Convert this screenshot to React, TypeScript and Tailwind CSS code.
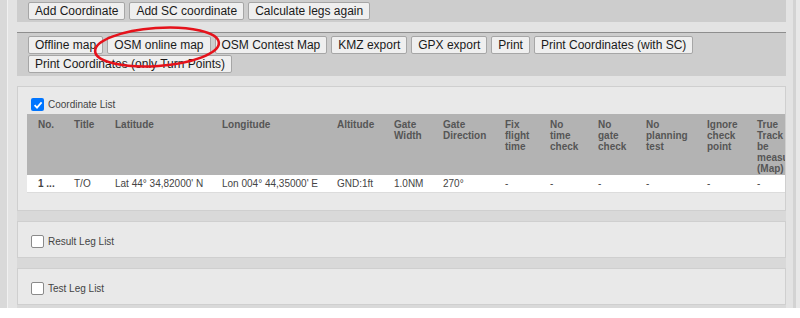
import React from 'react';

const cols = [
  { w: 47, pl: 11, head: ['No.'], val: '1 ...', bold: true },
  { w: 41, head: ['Title'], val: 'T/O' },
  { w: 107, head: ['Latitude'], val: "Lat 44° 34,82000' N" },
  { w: 115, head: ['Longitude'], val: "Lon 004° 44,35000' E" },
  { w: 57, head: ['Altitude'], val: 'GND:1ft' },
  { w: 49, head: ['Gate', 'Width'], val: '1.0NM' },
  { w: 62, head: ['Gate', 'Direction'], val: '270°' },
  { w: 45, head: ['Fix', 'flight', 'time'], val: '-' },
  { w: 48, head: ['No', 'time', 'check'], val: '-' },
  { w: 48, head: ['No', 'gate', 'check'], val: '-' },
  { w: 61, head: ['No', 'planning', 'test'], val: '-' },
  { w: 50, head: ['Ignore', 'check', 'point'], val: '-' },
  { w: 60, head: ['True', 'Track', 'be', 'measured', '(Map)'], val: '-' },
];

function Btn({ children }: { children: React.ReactNode }) {
  return (
    <div className="h-[18px] shrink-0 flex items-center px-[6px] bg-[#efefef] border border-[#a6a6a6] rounded-[2px] text-[12px] leading-none text-[#1a1a1a] whitespace-nowrap">
      {children}
    </div>
  );
}

function Check({ checked }: { checked?: boolean }) {
  return checked ? (
    <span className="w-[13px] h-[13px] shrink-0 rounded-[2px] bg-[#0075ff] flex items-center justify-center">
      <svg width="10" height="10" viewBox="0 0 10 10">
        <path d="M1.6 5.2 L4 7.6 L8.6 2.4" fill="none" stroke="white" strokeWidth="1.8" />
      </svg>
    </span>
  ) : (
    <span className="w-[13px] h-[13px] shrink-0 rounded-[2px] bg-white border border-[#8a8a8a]" />
  );
}

function Panel({ label }: { label: string }) {
  return (
    <div className="h-[37px] shrink-0 border border-[#cfcfcf] bg-[#e9e9e9] flex items-center pl-[13px] pt-[3px] gap-[4px]">
      <Check />
      <span className="text-[10px] text-[#444]">{label}</span>
    </div>
  );
}

export default function App() {
  return (
    <div className="relative w-[800px] h-[318px] overflow-hidden bg-white font-['Liberation_Sans',Arial,sans-serif]">
      <div className="flex h-[308px] bg-[#e8e8e8]">
        <div className="w-[7px] shrink-0 bg-[#d9d9d9]" />
        <div className="w-[789px] shrink-0 flex flex-col border-l border-[#f1f1f1] border-r-[3px] border-r-[#d3d3d3] bg-[#e3e3e3] pl-[9px] pr-[7px]">
          <div className="h-[22px] shrink-0 bg-[#cdcdcd] flex gap-[4px] pl-[11px] pt-[2px]">
            <Btn>Add Coordinate</Btn>
            <Btn>Add SC coordinate</Btn>
            <Btn>Calculate legs again</Btn>
          </div>

          <div className="mt-[10px] shrink-0 border-t border-[#8e8e8e] bg-[#cdcdcd] pl-[11px] pt-[3px] pb-[3px] flex flex-col gap-[1px]">
            <div className="flex gap-[4px]">
              <Btn>Offline map</Btn>
              <Btn>OSM online map</Btn>
              <Btn>OSM Contest Map</Btn>
              <Btn>KMZ export</Btn>
              <Btn>GPX export</Btn>
              <Btn>Print</Btn>
              <Btn>Print Coordinates (with SC)</Btn>
            </div>
            <div className="flex gap-[4px]">
              <Btn>Print Coordinates (only Turn Points)</Btn>
            </div>
          </div>

          <div className="mt-[10px] flex-1 bg-[#d9d9d9] flex flex-col gap-[10px]">
            <div className="h-[125px] shrink-0 border border-[#cfcfcf] bg-[#e9e9e9] pt-[11px] pl-[9px] overflow-hidden">
              <div className="flex items-center h-[13px] pl-[4px] gap-[4px]">
                <Check checked />
                <span className="text-[10px] text-[#444]">Coordinate List</span>
              </div>
              <div className="mt-[3px] overflow-hidden">
                <div className="flex h-[61px] bg-[#b3b3b3] pt-[5px]">
                  {cols.map((c, i) => (
                    <div
                      key={i}
                      className="shrink-0 text-[10px] leading-[11px] font-bold text-[#565656] whitespace-nowrap"
                      style={{ width: c.w, paddingLeft: c.pl ?? 0 }}
                    >
                      {c.head.map((l) => (
                        <div key={l}>{l}</div>
                      ))}
                    </div>
                  ))}
                </div>
                <div className="flex h-[18px] bg-white items-center border-b border-[#dcdcdc]">
                  {cols.map((c, i) => (
                    <div
                      key={i}
                      className={`shrink-0 text-[10px] leading-none whitespace-nowrap text-[#444] ${c.bold ? 'font-bold' : ''}`}
                      style={{ width: c.w, paddingLeft: c.pl ?? 0 }}
                    >
                      {c.val}
                    </div>
                  ))}
                </div>
              </div>
            </div>
            <Panel label="Result Leg List" />
            <Panel label="Test Leg List" />
          </div>
        </div>
      </div>

      <svg className="absolute left-0 top-0 pointer-events-none" width="800" height="318">
        <ellipse cx="157" cy="47" rx="62" ry="19" fill="none" stroke="#e5121b" strokeWidth="2.6" transform="rotate(-4 157 47)" />
      </svg>
    </div>
  );
}
